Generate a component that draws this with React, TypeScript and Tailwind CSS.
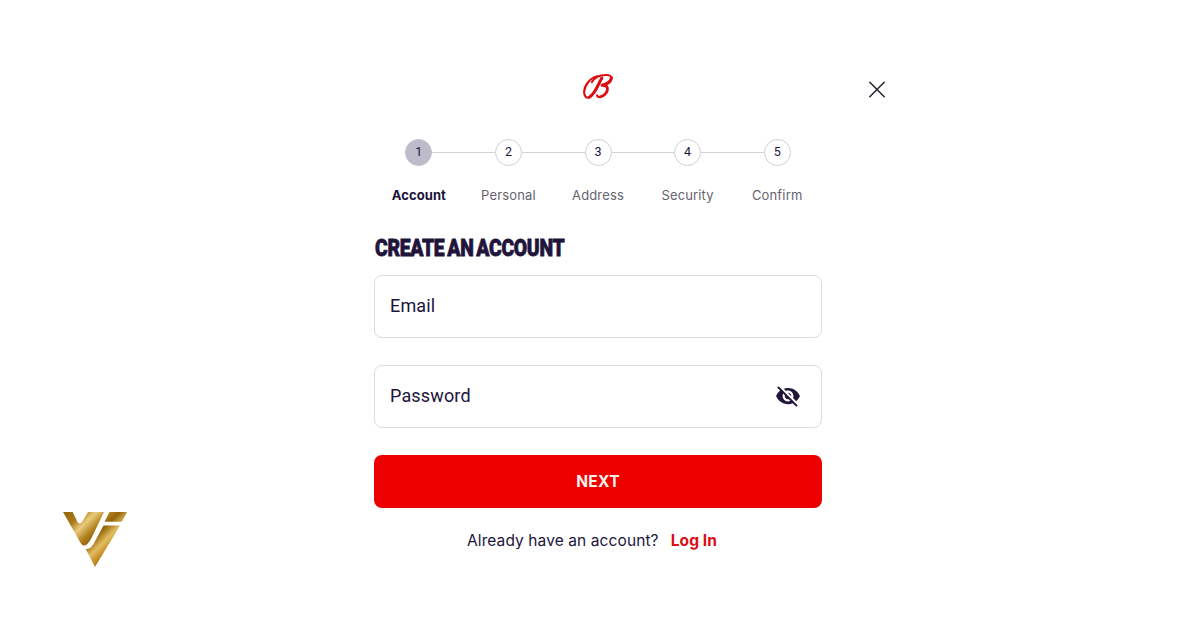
import { useState } from 'react';
import { MdVisibility, MdVisibilityOff } from 'react-icons/md';

const steps = ['Account', 'Personal', 'Address', 'Security', 'Confirm'];

function BrandMark() {
  return (
    <svg className="w-8 h-[27px]" viewBox="0 0 32 27" fill="none" stroke="#dc0d12" strokeLinecap="round" strokeLinejoin="round">
      <path strokeWidth={2.1} d="M15.500 3.200C8 4.800 2.400 12.500 2.100 19c-.1 4.600 2.600 6.600 5.600 5.200C13 22 16 13 20 5" />
      <path strokeWidth={2.9} d="M7.600 24C13 20.800 16 11.600 19.800 5" />
      <path strokeWidth={2} d="M9.800 9.200C12.400 4.800 17.500 2.300 23.800 2.100c4.200-.1 6.400 1.300 5.900 3.900-.6 2.800-4.700 5.300-9.700 6.100" />
      <path strokeWidth={2.9} d="M29.300 4.700c-.2 3.600-4.300 6.700-9.300 7.500 4.200-.2 6.200 1.600 5.400 4.800-.8 3.400-4 6.500-7.200 6.900" />
      <path strokeWidth={2} d="M18.600 24c-2 .3-3.300-.3-3.600-1.700" />
    </svg>
  );
}

function GoldLogo() {
  return (
    <svg className="w-16 h-[55px]" viewBox="0 0 64 55" fill="url(#gold)">
      <defs>
        <linearGradient id="gold" gradientUnits="userSpaceOnUse" x1="0" y1="0" x2="49" y2="49">
          <stop offset="0" stopColor="#94670f" />
          <stop offset=".2" stopColor="#a8781a" />
          <stop offset=".34" stopColor="#e9cc7c" />
          <stop offset=".48" stopColor="#b1821e" />
          <stop offset=".58" stopColor="#94660b" />
          <stop offset=".72" stopColor="#e3bd60" />
          <stop offset=".84" stopColor="#bf8b20" />
          <stop offset="1" stopColor="#a77612" />
        </linearGradient>
      </defs>
      <path d="M0 0h9.700l4.600 9.500q2.500 4 5.200-.5L25 0h16L28.500 26q-4.500 8.500-8.500 7.500Q18.500 33 17 30z" />
      <path d="M46.500 0H64l-5 9.700H41.500z" />
      <path d="M40.500 13.500H57L32 55l-9.300-18q4.500.5 7.800-5z" />
    </svg>
  );
}

export default function App() {
  const [email, setEmail] = useState('');
  const [password, setPassword] = useState('');
  const [visible, setVisible] = useState(false);
  const EyeIcon = visible ? MdVisibility : MdVisibilityOff;

  return (
    <div className="flex w-[1200px] h-[630px] overflow-hidden bg-white text-[#21143b] font-['Inter',sans-serif]">
      <aside className="flex items-end w-[374px] pl-[63px] pb-[63px] shrink-0">
        <GoldLogo />
      </aside>

      <main className="w-[448px] pt-[73px] shrink-0">
        <div className="flex justify-center h-[66px]">
          <BrandMark />
        </div>

        <ol className="grid grid-cols-5">
          {steps.map((step, i) => (
            <li key={step} className="flex flex-col items-center">
              <div className="flex items-center w-full">
                <span className={`h-px flex-1 ${i > 0 ? 'bg-[#d2d2d5]' : ''}`} />
                <span className={`flex items-center justify-center w-[27px] h-[27px] rounded-full border text-[12.5px] font-['Roboto',sans-serif] ${i === 0 ? 'bg-[#bdbacb] border-[#c3c0ce]' : 'bg-white border-[#cfcfd2]'}`}>
                  {i + 1}
                </span>
                <span className={`h-px flex-1 ${i < steps.length - 1 ? 'bg-[#d2d2d5]' : ''}`} />
              </div>
              <span className={`mt-[19px] text-[13px] leading-5 ${i === 0 ? 'font-bold tracking-[0.1px]' : 'tracking-[0.15px] text-[#67636f]'}`}>
                {step}
              </span>
            </li>
          ))}
        </ol>

        <h1 className="mt-[27px] ml-px w-max h-8 text-[24.5px] leading-8 font-black tracking-[-0.4px] [word-spacing:-2px] whitespace-nowrap origin-left scale-x-[0.79] [-webkit-text-stroke:0.8px_#21143b] font-['Roboto',sans-serif]">
          CREATE AN ACCOUNT
        </h1>

        <form onSubmit={(e) => e.preventDefault()}>
          <div className="flex items-center mt-[11px] h-[63px] px-[15px] rounded-lg border border-[#dcdcdf]">
            <input
              type="email"
              placeholder="Email"
              aria-label="Email"
              value={email}
              onChange={(e) => setEmail(e.target.value)}
              className="w-full pb-[3px] text-[18px] tracking-[0.15px] outline-none placeholder:text-[#21143b] font-['Roboto',sans-serif]"
            />
          </div>
          <div className="flex items-center mt-[27px] h-[63px] pl-[15px] pr-5 rounded-lg border border-[#dcdcdf]">
            <input
              type={visible ? 'text' : 'password'}
              placeholder="Password"
              aria-label="Password"
              value={password}
              onChange={(e) => setPassword(e.target.value)}
              className="w-full pb-[3px] text-[18px] tracking-[0.15px] outline-none placeholder:text-[#21143b] font-['Roboto',sans-serif]"
            />
            <button type="button" onClick={() => setVisible(!visible)} aria-label="Toggle password" className="pb-0.5">
              <EyeIcon className="w-[26px] h-[26px]" />
            </button>
          </div>
          <button type="submit" className="block mt-[27px] w-full h-[53px] rounded-lg bg-[#ed0000] text-[#fff0ec] text-[15.5px] font-bold tracking-[0.3px]">
            NEXT
          </button>
        </form>

        <p className="flex justify-center mt-[21px] pr-3 text-[15.5px] leading-6 tracking-[0.1px] whitespace-nowrap">
          <span>Already have an account?</span>
          <a href="#" className="ml-3 font-bold text-[#dc0d12]">Log In</a>
        </p>
      </main>

      <div className="pt-[81px] pl-[47px]">
        <button type="button" aria-label="Close" className="block">
          <svg className="w-4 h-[17px]" viewBox="0 0 16 16" stroke="#24222d" strokeWidth={1.5} strokeLinecap="round">
            <path d="M.8.8l14.400 14.400M15.200.8L.8 15.200" />
          </svg>
        </button>
      </div>
    </div>
  );
}
